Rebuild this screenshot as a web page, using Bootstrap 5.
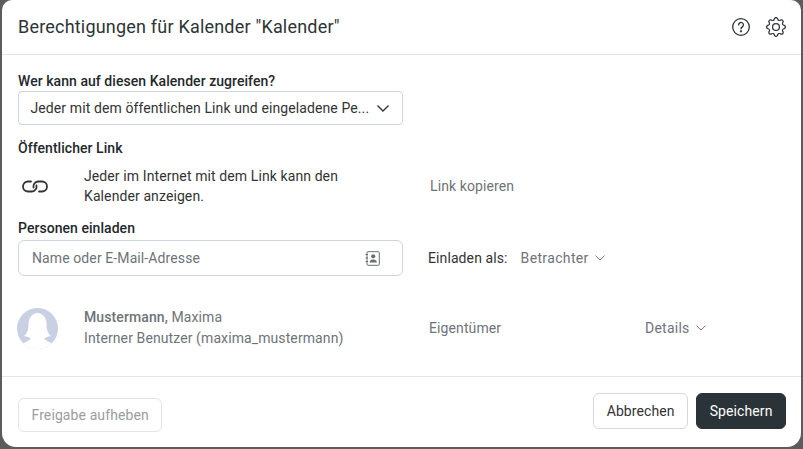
<!DOCTYPE html>
<html lang="de">
<head>
<meta charset="utf-8">
<title>Berechtigungen</title>
<link href="https://cdn.jsdelivr.net/npm/bootstrap@5.3.0/dist/css/bootstrap.min.css" rel="stylesheet">
<style>
html,body{width:803px;height:449px;overflow:hidden;margin:0}
body{background:#5c5c5c;font-family:Roboto,"Liberation Sans",sans-serif;font-size:14px;letter-spacing:.1px;color:#333;padding:0 2px 2px 2px}
.dlg{height:447px;border-radius:10px 10px 14px 14px;background:#fff;display:flex;flex-direction:column}
.dlg-head{height:55px;border-bottom:1px solid #e3e4e6;padding:0 15px 0 16px;flex:none}
.dlg-title{font-size:18px;color:#2d3436;margin:0;font-weight:400;line-height:54px;letter-spacing:.2px}
.dlg-body{flex:1;padding:0 16px}
.dlg-foot{height:71px;flex:none;border-top:1px solid #e3e4e6;padding:16px 15px 0 16px}
.lbl{font-weight:500;color:#23282c;line-height:18px;font-size:14px;letter-spacing:.05px}
.fake-select{height:34px;width:385px;border:1px solid #ced4e0;border-radius:4px;padding:0 12px 0 11.500px;color:#333;white-space:nowrap}
.lnk-icon{width:66px}
.leftcol{width:385px;flex:none}
.muted-txt{color:#6e7378}
.invite-box{height:36px;border:1px solid #ced4e0;border-radius:6px;padding:0 13px;color:#6e7378}
.ava{width:41px;height:41px;flex:none;margin-left:-1px}
.btn-plain{height:36px;font-size:14px;letter-spacing:.1px;padding:0 12.500px;border-radius:6px;background:#fff;color:#333;border:1px solid #d5d7dc}
.btn-off{height:34px}
.btn-off:disabled{color:#9a9da1;border-color:#e3e4e6;background:#fff;opacity:1}
.btn-dark-s{background:#2a3338;border-color:#2a3338;color:#fff}
.line-20{line-height:20px}
.sec-a{padding-top:17px;margin-bottom:1px}
.sec-b{margin-top:14px}
.sec-c{margin-top:9px}
.sec-d{margin-top:13px;margin-bottom:3px}
.sec-e{margin-top:31px}
.who{margin-left:26px;line-height:21px}
.col-own{width:216px;margin-left:26px}
.inv-role{margin-left:13px;letter-spacing:.35px}
.inv-as{margin-left:25px}
.head-icons{gap:15px}
.link-copy{margin-left:27px}
.invite-ico{margin-right:9px}
.fw-medium{font-weight:500}
.det-txt{letter-spacing:.25px}
.foot-off{margin-top:5px}
.chev{margin-left:6px}
</style>
</head>
<body>
<div class="dlg">
  <header class="dlg-head d-flex align-items-center justify-content-between">
    <h1 class="dlg-title">Berechtigungen für Kalender "Kalender"</h1>
    <div class="d-flex align-items-center head-icons">
      <svg width="20" height="20" viewBox="0 0 20 20" fill="none" stroke="#2d3436" stroke-width="1.3"><circle cx="10" cy="10" r="8.3"/><path d="M7.600 7.900a2.400 2.400 0 1 1 3.700 2c-.8.500-1.300 1-1.300 1.900" stroke-linecap="round"/><circle cx="10" cy="14.300" r=".5" fill="#2d3436"/></svg>
      <svg width="20" height="20" viewBox="0 0 16 16" fill="#2d3436"><path d="M8 4.754a3.246 3.246 0 1 0 0 6.492 3.246 3.246 0 0 0 0-6.492zM5.754 8a2.246 2.246 0 1 1 4.492 0 2.246 2.246 0 0 1-4.492 0z"/><path d="M9.796 1.343c-.527-1.790-3.065-1.790-3.592 0l-.094.319a.873.873 0 0 1-1.255.52l-.292-.16c-1.640-.892-3.433.902-2.540 2.541l.159.292a.873.873 0 0 1-.52 1.255l-.319.094c-1.790.527-1.790 3.065 0 3.592l.319.094a.873.873 0 0 1 .52 1.255l-.16.292c-.892 1.640.901 3.434 2.541 2.540l.292-.159a.873.873 0 0 1 1.255.52l.094.319c.527 1.790 3.065 1.790 3.592 0l.094-.319a.873.873 0 0 1 1.255-.52l.292.16c1.640.893 3.434-.902 2.540-2.541l-.159-.292a.873.873 0 0 1 .52-1.255l.319-.094c1.790-.527 1.790-3.065 0-3.592l-.319-.094a.873.873 0 0 1-.52-1.255l.16-.292c.893-1.640-.902-3.433-2.541-2.540l-.292.159a.873.873 0 0 1-1.255-.52l-.094-.319zm-2.633.283c.246-.835 1.428-.835 1.674 0l.094.319a1.873 1.873 0 0 0 2.693 1.115l.291-.16c.764-.415 1.600.42 1.184 1.185l-.159.292a1.873 1.873 0 0 0 1.116 2.692l.318.094c.835.246.835 1.428 0 1.674l-.319.094a1.873 1.873 0 0 0-1.115 2.693l.16.291c.415.764-.42 1.600-1.185 1.184l-.291-.159a1.873 1.873 0 0 0-2.693 1.116l-.094.318c-.246.835-1.428.835-1.674 0l-.094-.319a1.873 1.873 0 0 0-2.692-1.115l-.292.16c-.764.415-1.600-.42-1.184-1.185l.159-.291A1.873 1.873 0 0 0 1.945 8.930l-.319-.094c-.835-.246-.835-1.428 0-1.674l.319-.094A1.873 1.873 0 0 0 3.060 4.377l-.16-.292c-.415-.764.42-1.600 1.185-1.184l.292.159a1.873 1.873 0 0 0 2.692-1.115l.094-.319z"/></svg>
    </div>
  </header>
  <main class="dlg-body">
    <div class="lbl sec-a">Wer kann auf diesen Kalender zugreifen?</div>
    <div class="fake-select d-flex align-items-center justify-content-between">
      <span>Jeder mit dem öffentlichen Link und eingeladene Pe...</span>
      <svg width="14" height="9" viewBox="0 0 14 9" fill="none" stroke="#333" stroke-width="1.4"><path d="M1.500 1.500 7 7l5.500-5.500"/></svg>
    </div>
    <div class="lbl sec-b">Öffentlicher Link</div>
    <div class="d-flex align-items-center sec-c">
      <div class="leftcol d-flex align-items-center">
        <div class="lnk-icon ps-1 d-flex">
          <svg width="26" height="13" viewBox="0 0 26 13" fill="none" stroke="#333" stroke-width="1.800" stroke-linecap="round"><path d="M9 1.500H6a5 5 0 0 0 0 10h4a5 5 0 0 0 4.500-6"/><path d="M17 11.500h3a5 5 0 0 0 0-10h-4a5 5 0 0 0-4.500 6"/></svg>
        </div>
        <div class="line-20">Jeder im Internet mit dem Link kann den<br>Kalender anzeigen.</div>
      </div>
      <div class="muted-txt link-copy">Link kopieren</div>
    </div>
    <div class="lbl sec-d">Personen einladen</div>
    <div class="d-flex align-items-center">
      <div class="leftcol invite-box d-flex align-items-center justify-content-between">
        <span>Name oder E-Mail-Adresse</span>
        <svg class="invite-ico" width="15" height="15" viewBox="0 0 15 15" fill="none"><rect x="2" y=".7" width="12.300" height="13.600" rx="1" stroke="#6a6f73" stroke-width="1"/><path d="M.5 3.500h2.500M.5 7h2.500M.5 10.500h2.500" stroke="#6a6f73"/><circle cx="8.200" cy="5.300" r="2.100" fill="#6a6f73"/><path d="M4.500 11.500c0-2 1.600-3 3.700-3s3.700 1 3.700 3z" fill="#6a6f73"/></svg>
      </div>
      <div class="inv-as d-flex align-items-center">
        <span>Einladen als:</span>
        <span class="muted-txt inv-role">Betrachter</span>
        <svg class="chev" width="10" height="6" viewBox="0 0 10 6" fill="none" stroke="#777" stroke-width="1"><path d="M.5.700 5 5 9.500.700"/></svg>
      </div>
    </div>
    <div class="d-flex align-items-center muted-txt sec-e">
      <div class="leftcol d-flex align-items-center">
        <svg class="ava" viewBox="0 0 41 41"><defs><clipPath id="c"><circle cx="20.500" cy="20.500" r="20.500"/></clipPath></defs><g clip-path="url(#c)"><rect width="41" height="41" fill="#cad0e4"/><path d="M10 24c1.500-3 1.500-5 1.500-8C11.500 10 15 5 20.500 5S29.500 10 29.500 16c0 3 0 5 1.500 8 .6 1.500 1.500 3 3 4-3 .5-5.500 1-7 3 4 3 10 5 14 7v5H0v-5c4-2 10-4 14-7-1.500-2-4-2.500-7-3 1.500-1 2.400-2.500 3-4z" fill="#fff"/></g></svg>
        <div class="who"><span class="fw-medium">Mustermann,</span> Maxima<br>Interner Benutzer (maxima_mustermann)</div>
      </div>
      <div class="col-own">Eigentümer</div>
      <div class="d-flex align-items-center">
        <span class="det-txt">Details</span>
        <svg class="chev" width="10" height="6" viewBox="0 0 10 6" fill="none" stroke="#777" stroke-width="1"><path d="M.5.700 5 5 9.500.700"/></svg>
      </div>
    </div>
  </main>
  <footer class="dlg-foot d-flex align-items-start justify-content-between">
    <button type="button" class="btn btn-plain btn-off foot-off" disabled>Freigabe aufheben</button>
    <div class="d-flex gap-2">
      <button type="button" class="btn btn-plain">Abbrechen</button>
      <button type="button" class="btn btn-plain btn-dark-s">Speichern</button>
    </div>
  </footer>
</div>
<script src="https://cdn.jsdelivr.net/npm/bootstrap@5.3.0/dist/js/bootstrap.bundle.min.js"></script>
</body>
</html>
